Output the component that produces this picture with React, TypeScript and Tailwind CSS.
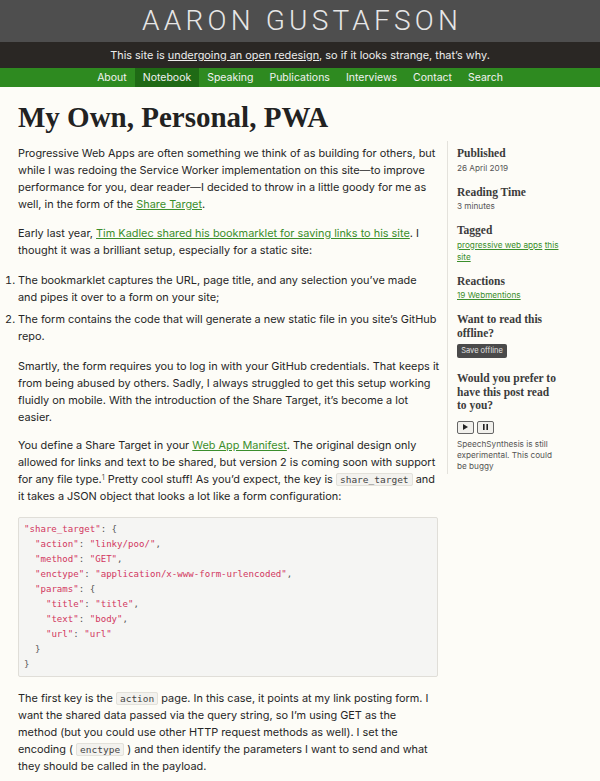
const navItems = ['About', 'Notebook', 'Speaking', 'Publications', 'Interviews', 'Contact', 'Search'];

function Str({ children }: { children: string }) {
  return <span className="text-[#d2375f]">{children}</span>;
}

function Code({ children }: { children: string }) {
  return (
    <code className="font-['DejaVu_Sans_Mono',monospace] text-[9.5px] leading-none text-[#444] bg-[#f3f2ee] border border-[#e3e1da] rounded-[2px] px-[3px] py-0">
      {children}
    </code>
  );
}

function SideHeading({ children }: { children: React.ReactNode }) {
  return (
    <h3 className="font-['Liberation_Serif',serif] font-bold text-[11.5px] leading-[13.5px] text-[#3b3b3b]">{children}</h3>
  );
}

export default function App() {
  return (
    <div className="min-h-[781px] bg-[#fdfcf7] text-[#262626] font-['Inter',sans-serif]">
      <header>
        <div className="h-[42px] bg-[#4e4e4e] flex items-center justify-center">
          <h1 className="font-['Roboto',sans-serif] font-light text-[28px] leading-none tracking-[0.15em] pl-[0.15em] text-[#e6e6e6]">
            AARON GUSTAFSON
          </h1>
        </div>
        <div className="h-[26px] bg-[#2a2724] flex items-center justify-center text-[10.9px] text-[#ededed]">
          <p>
            This site is <a className="underline">undergoing an open redesign</a>, so if it looks strange, that’s why.
          </p>
        </div>
        <nav className="h-[19px] bg-[#2e8a20] flex justify-center text-[10.5px] text-[#f2f2f2]">
          {navItems.map((item) => (
            <a
              key={item}
              className={`px-[8px] flex items-center ${item === 'Notebook' ? 'bg-[#1f6a15]' : ''}`}
            >
              {item}
            </a>
          ))}
        </nav>
      </header>

      <main className="px-[18px]">
        <h2 className="pt-[12px] font-['Liberation_Serif',serif] font-bold text-[29px] leading-[36px] text-[#222]">
          My Own, Personal, PWA
        </h2>

        <div className="flex items-start mt-[6px]">
          <article className="w-[420px] pt-[4px] text-[10.9px] leading-[17px]">
            <p className="mb-[12px]">
              Progressive Web Apps are often something we think of as building for others, but while I was redoing the
              Service Worker implementation on this site—to improve performance for you, dear reader—I decided to throw
              in a little goody for me as well, in the form of the{' '}
              <a className="text-[#3b8e2c] underline">Share Target</a>.
            </p>
            <p className="mb-[13px]">
              Early last year,{' '}
              <a className="text-[#3b8e2c] underline">Tim Kadlec shared his bookmarklet for saving links to his site</a>. I
              thought it was a brilliant setup, especially for a static site:
            </p>
            <ol className="list-decimal list-outside mb-[13px]">
              <li className="mb-[5px]">
                The bookmarklet captures the URL, page title, and any selection you’ve made and pipes it over to a form on
                your site;
              </li>
              <li>The form contains the code that will generate a new static file in you site’s GitHub repo.</li>
            </ol>
            <p className="mb-[11px] -mr-[6px]">
              Smartly, the form requires you to log in with your GitHub credentials. That keeps it from being abused by
              others. Sadly, I always struggled to get this setup working fluidly on mobile. With the introduction of the
              Share Target, it’s become a lot easier.
            </p>
            <p className="mb-[12px]">
              You define a Share Target in your <a className="text-[#3b8e2c] underline">Web App Manifest</a>. The
              original design only allowed for links and text to be shared, but version 2 is coming soon with support for
              any file type.<sup className="text-[7px] leading-none text-[#555]">1</sup> Pretty cool stuff! As you’d
              expect, the key is <Code>share_target</Code> and it takes a JSON object that looks a lot like a form
              configuration:
            </p>
            <pre className="mb-[13px] bg-[#f5f5f3] border border-[#e0ded8] rounded-[2px] px-[5px] py-[4px] font-['DejaVu_Sans_Mono',monospace] text-[9.1px] leading-[15px] text-[#555]">
              <Str>"share_target"</Str>: {'{'}
              {'\n  '}
              <Str>"action"</Str>: <Str>"linky/poo/"</Str>,
              {'\n  '}
              <Str>"method"</Str>: <Str>"GET"</Str>,
              {'\n  '}
              <Str>"enctype"</Str>: <Str>"application/x-www-form-urlencoded"</Str>,
              {'\n  '}
              <Str>"params"</Str>: {'{'}
              {'\n    '}
              <Str>"title"</Str>: <Str>"title"</Str>,
              {'\n    '}
              <Str>"text"</Str>: <Str>"body"</Str>,
              {'\n    '}
              <Str>"url"</Str>: <Str>"url"</Str>
              {'\n  }'}
              {'\n}'}
            </pre>
            <p>
              The first key is the <Code>action</Code> page. In this case, it points at my link posting form. I want the
              shared data passed via the query string, so I’m using GET as the method (but you could use other HTTP
              request methods as well). I set the encoding ( <Code>enctype</Code> ) and then identify the parameters I
              want to send and what they should be called in the payload.
            </p>
          </article>

          <aside className="ml-[9px] border-l border-[#e4e2dc] pl-[9px] pt-[6px] pb-[2px] w-[113px] text-[8.2px] leading-[12px] text-[#555]">
            <div className="mb-[12px]">
              <SideHeading>Published</SideHeading>
              <p className="mt-[1px]">26 April 2019</p>
            </div>
            <div className="mb-[12px]">
              <SideHeading>Reading Time</SideHeading>
              <p className="mt-[1px]">3 minutes</p>
            </div>
            <div className="mb-[12px]">
              <SideHeading>Tagged</SideHeading>
              <p className="mt-[1px]">
                <a className="text-[#3b8e2c] underline">progressive web apps</a>{' '}
                <a className="text-[#3b8e2c] underline">this site</a>
              </p>
            </div>
            <div className="mb-[12px]">
              <SideHeading>Reactions</SideHeading>
              <p className="mt-[1px]">
                <a className="text-[#3b8e2c] underline">19 Webmentions</a>
              </p>
            </div>
            <div>
              <SideHeading>Want to read this offline?</SideHeading>
              <button className="mt-[4px] w-[50px] h-[14px] bg-[#4a4a4a] rounded-[2px] text-[7.5px] leading-none text-[#e2e2e2]">
                Save offline
              </button>
            </div>
            <div className="mt-[14px]">
              <SideHeading>Would you prefer to have this post read to you?</SideHeading>
              <div className="mt-[8px] flex gap-[3px]">
                <button className="w-[17px] h-[13px] bg-[#f1f0ec] border border-[#666] rounded-[2px] flex items-center justify-center">
                  <svg width="5" height="6" viewBox="0 0 5 6">
                    <path d="M0 0 L5 3 L0 6 Z" fill="#222" />
                  </svg>
                </button>
                <button className="w-[17px] h-[13px] bg-[#f1f0ec] border border-[#666] rounded-[2px] flex items-center justify-center">
                  <svg width="5" height="6" viewBox="0 0 5 6">
                    <rect x="0" y="0" width="1.6" height="6" fill="#222" />
                    <rect x="3.4" y="0" width="1.6" height="6" fill="#222" />
                  </svg>
                </button>
              </div>
              <p className="mt-[5px] leading-[11px]">SpeechSynthesis is still experimental. This could be buggy</p>
            </div>
          </aside>
        </div>
      </main>
    </div>
  );
}
